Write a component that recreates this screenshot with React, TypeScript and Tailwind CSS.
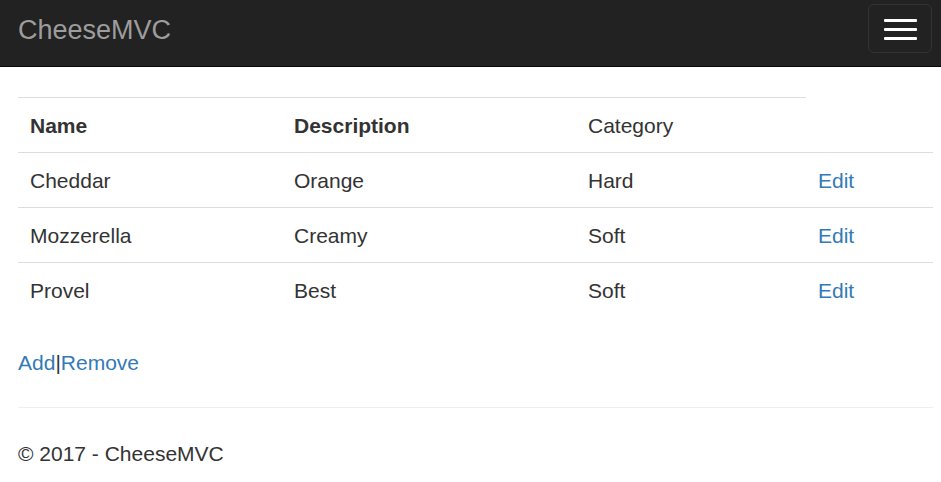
import React from 'react';

const cheeses = [
  { name: 'Cheddar', description: 'Orange', category: 'Hard' },
  { name: 'Mozzerella', description: 'Creamy', category: 'Soft' },
  { name: 'Provel', description: 'Best', category: 'Soft' },
];

const cell = 'pl-[12px] pr-[12px] pt-[13px] pb-[11px] border-t border-[#ddd]';

const App = () => {
  return (
    <div className="min-h-screen bg-white text-[#333] text-[21px] leading-[30px] font-['Liberation_Sans',Arial,sans-serif]">
      {/* Navbar */}
      <nav className="flex items-start justify-between h-[67px] bg-[#222] border-b border-[#080808]">
        <a className="mt-[15px] ml-[18px] text-[27px] leading-[30px] text-[#9d9d9d]">CheeseMVC</a>
        <button className="mt-[4px] mr-[9px] w-[64px] h-[49px] pt-[14px] flex flex-col items-center gap-[6px] border border-[#333] rounded-[6px]">
          <span className="block w-[33px] h-[3px] bg-white rounded-[1px]" />
          <span className="block w-[33px] h-[3px] bg-white rounded-[1px]" />
          <span className="block w-[33px] h-[3px] bg-white rounded-[1px]" />
        </button>
      </nav>

      <div className="pl-[18px] pr-[8px] mt-[30px]">
        {/* Table */}
        <table className="w-[915px] border-collapse mb-[30px]">
          <colgroup>
            <col className="w-[264px]" />
            <col className="w-[294px]" />
            <col className="w-[230px]" />
            <col className="w-[127px]" />
          </colgroup>
          <thead>
            <tr>
              <th className={`text-left font-bold ${cell}`}>Name</th>
              <th className={`text-left font-bold ${cell}`}>Description</th>
              <th className={`text-left font-normal ${cell}`}>Category</th>
            </tr>
          </thead>
          <tbody>
            {cheeses.map((cheese) => (
              <tr key={cheese.name}>
                <td className={cell}>{cheese.name}</td>
                <td className={cell}>{cheese.description}</td>
                <td className={cell}>{cheese.category}</td>
                <td className={cell}>
                  <a className="text-[#337ab7]">Edit</a>
                </td>
              </tr>
            ))}
          </tbody>
        </table>

        <p className="pt-[1px]">
          <a className="text-[#337ab7]">Add</a>|<a className="text-[#337ab7]">Remove</a>
        </p>

        <hr className="mt-[29px] mb-[30px] border-0 border-t border-[#eee]" />

        <footer>
          <p className="pt-[1px]">&copy; 2017 - CheeseMVC</p>
        </footer>
      </div>
    </div>
  );
};

export default App;
